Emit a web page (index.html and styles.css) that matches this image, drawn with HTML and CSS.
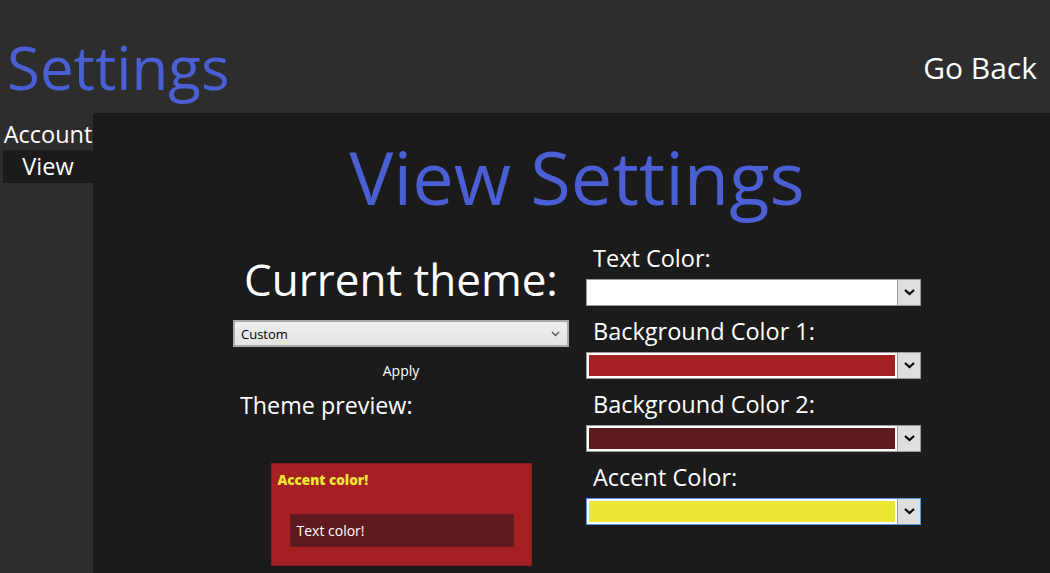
FILE: index.html
```html
<!DOCTYPE html>
<html lang="en">
<head>
<meta charset="utf-8">
<title>Settings</title>
<link rel="stylesheet" href="styles.css">
</head>
<body>
<div class="app">
  <header class="topbar">
    <h1 class="brand">Settings</h1>
    <a class="back">Go Back</a>
  </header>
  <div class="content">
    <nav class="side">
      <div class="nav-item">Account</div>
      <div class="nav-item active">View</div>
    </nav>
    <main class="main">
      <h2 class="page-title">View Settings</h2>
      <div class="cols">
        <section class="theme-col">
          <div class="theme-title">Current theme:</div>
          <div class="theme-select">
            <span>Custom</span>
            <svg class="chev" width="9" height="6" viewBox="0 0 9 6"><path d="M1 1 L4.5 4.5 L8 1" fill="none" stroke="#555" stroke-width="1.4"/></svg>
          </div>
          <div class="apply">Apply</div>
          <div class="preview-label">Theme preview:</div>
          <div class="preview">
            <div class="preview-accent">Accent color!</div>
            <div class="preview-inner">Text color!</div>
          </div>
        </section>
        <section class="color-col">
          <div class="field-label">Text Color:</div>
          <div class="color-select">
            <div class="swatch-wrap"><div class="swatch sw-white"></div></div>
            <div class="drop"><svg width="11" height="7" viewBox="0 0 11 7"><path d="M1 1 L5.5 5 L10 1" fill="none" stroke="#000" stroke-width="2.2"/></svg></div>
          </div>
          <div class="field-label">Background Color 1:</div>
          <div class="color-select">
            <div class="swatch-wrap"><div class="swatch sw-red"></div></div>
            <div class="drop"><svg width="11" height="7" viewBox="0 0 11 7"><path d="M1 1 L5.5 5 L10 1" fill="none" stroke="#000" stroke-width="2.2"/></svg></div>
          </div>
          <div class="field-label">Background Color 2:</div>
          <div class="color-select">
            <div class="swatch-wrap"><div class="swatch sw-dark"></div></div>
            <div class="drop"><svg width="11" height="7" viewBox="0 0 11 7"><path d="M1 1 L5.5 5 L10 1" fill="none" stroke="#000" stroke-width="2.2"/></svg></div>
          </div>
          <div class="field-label">Accent Color:</div>
          <div class="color-select focused">
            <div class="swatch-wrap"><div class="swatch sw-yellow"></div></div>
            <div class="drop"><svg width="11" height="7" viewBox="0 0 11 7"><path d="M1 1 L5.5 5 L10 1" fill="none" stroke="#000" stroke-width="2.2"/></svg></div>
          </div>
        </section>
      </div>
    </main>
  </div>
</div>
</body>
</html>
```

FILE: styles.css
```css
* { box-sizing: border-box; }
html, body { margin: 0; padding: 0; }
body {
  background: #2d2d2d;
  font-family: "Open Sans", "Noto Sans", sans-serif;
  color: #fff;
  width: 1050px;
  height: 573px;
  overflow: hidden;
}
.app { display: flex; flex-direction: column; height: 573px; }
.topbar {
  flex-shrink: 0;
  height: 113px;
  background: #2d2d2d;
  display: flex;
  align-items: flex-end;
  justify-content: space-between;
  padding: 0 13px 0 7px;
}
.brand {
  margin: 0 0 6px 0;
  font-weight: 400;
  font-size: 60px;
  line-height: 80px;
  color: #4b5fd5;
}
.back {
  font-size: 30px;
  line-height: 40px;
  margin-bottom: 25px;
  color: #fff;
}
.content { flex: 1; min-height: 0; display: flex; overflow: hidden; }
.side {
  width: 93px;
  flex-shrink: 0;
  background: #2d2d2d;
  padding-top: 6px;
  padding-left: 3px;
}
.nav-item {
  font-size: 23.5px;
  line-height: 30px;
  text-align: center;
  white-space: nowrap;
}
.nav-item.active {
  background: #1b1b1b;
  height: 33px;
  line-height: 33px;
  margin-top: 1px;
}
.main {
  flex: 1;
  background: #1b1b1b;
  padding-left: 11px;
  display: flex;
  flex-direction: column;
  align-items: center;
}
.page-title {
  margin: 16px 0 0 0;
  font-weight: 400;
  font-size: 74px;
  line-height: 96px;
  color: #4b5fd5;
  white-space: nowrap;
}
.cols {
  display: flex;
  gap: 17px;
  margin-top: 18px;
}
.theme-col {
  width: 336px;
  display: flex;
  flex-direction: column;
  align-items: center;
  padding-top: 8px;
}
.theme-title {
  font-size: 44px;
  line-height: 56px;
  white-space: nowrap;
}
.theme-select {
  margin-top: 13px;
  width: 336px;
  height: 27px;
  border: 2px solid #a9a9a9;
  background: linear-gradient(#efefef, #e3e3e3);
  display: flex;
  align-items: center;
  justify-content: space-between;
  padding: 0 7px 0 6px;
  color: #000;
  font-size: 13px;
}
.chev { display: block; }
.apply {
  margin-top: 14px;
  font-size: 14px;
  line-height: 20px;
}
.preview-label {
  align-self: flex-start;
  margin: 9px 0 0 7px;
  font-size: 23.3px;
  line-height: 30px;
}
.preview {
  margin-top: 43px;
  width: 261px;
  height: 103px;
  background: #a52022;
  border: 1px solid #8e1c1e;
  padding: 7px 0 0 6px;
}
.preview-accent {
  color: #ece735;
  font-weight: 800;
  font-size: 13.5px;
  line-height: 18px;
}
.preview-inner {
  margin: 25px 0 0 12px;
  width: 224px;
  height: 33px;
  background: #5e1a1c;
  border: 1px solid #6e1e20;
  padding-left: 6px;
  font-size: 14px;
  line-height: 31px;
}
.color-col {
  width: 335px;
  display: flex;
  flex-direction: column;
}
.field-label {
  font-size: 23.5px;
  line-height: 30px;
  padding-left: 7px;
  margin-top: 10px;
  white-space: nowrap;
}
.field-label:first-child { margin-top: 0; }
.color-select {
  margin-top: 6px;
  height: 27px;
  display: flex;
  border: 1px solid #999;
  background: #fff;
}
.color-select.focused { border-color: #5a9be0; }
.swatch-wrap {
  flex: 1;
  padding: 2px;
  border-right: 1px solid #999;
}
.swatch { height: 100%; }
.sw-white { background: #fff; }
.sw-red { background: #a52022; }
.sw-dark { background: #5e1a1c; }
.sw-yellow { background: #ebe635; }
.drop {
  width: 22px;
  background: #dedede;
  display: flex;
  align-items: center;
  justify-content: center;
}
.drop svg { display: block; }
```
